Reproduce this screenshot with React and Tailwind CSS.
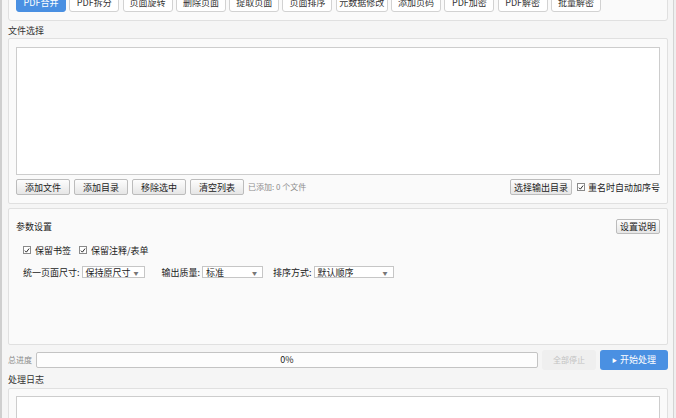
import React from 'react';

const tabs = ['PDF合并', 'PDF拆分', '页面旋转', '删除页面', '提取页面', '页面排序', '元数据修改', '添加页码', 'PDF加密', 'PDF解密', '批量解密'];

const Check = () => (
  <span className="w-[8px] h-[8px] bg-white border border-[#8a8a8a] flex items-center justify-center shrink-0">
    <svg width="7" height="7" viewBox="0 0 8 8">
      <path d="M1.2 4.2 L3.2 6.2 L6.8 1.4" fill="none" stroke="#222" strokeWidth="1.3" />
    </svg>
  </span>
);

const Btn = ({ children, className = '' }) => (
  <button className={`h-[16px] flex items-center justify-center bg-gradient-to-b from-[#fdfdfd] to-[#e6e6e6] border border-[#bcbcbc] rounded-[2px] text-[9px] leading-none text-[#222] ${className}`}>
    {children}
  </button>
);

const Select = ({ value, w }) => (
  <div className={`h-[12px] ${w} bg-white border border-[#c6c6c6] flex items-center justify-between pl-[3px] pr-[5px] text-[9px] leading-none text-[#222]`}>
    <span>{value}</span>
    <span className="text-[5px] text-[#777]">▼</span>
  </div>
);

export default function App() {
  return (
    <div
      className="w-[676px] h-[418px] overflow-hidden bg-[#f5f5f5] flex text-[#333]"
      style={{ fontFamily: '"Noto Sans CJK SC", "Noto Sans", sans-serif' }}
    >
      <div className="w-[2px] bg-[#cfcfcf] shrink-0" />
      <div className="flex-1 pl-[6px] pr-[5px] flex flex-col">
        {/* 顶部功能按钮 */}
        <div className="-mt-[16px] h-[37px] bg-[#fafafa] border border-[#e0e0e0] rounded-[3px] pt-[7px] pl-[7px] flex gap-[3.3px] shrink-0">
          {tabs.map((t, i) => (
            <button
              key={t}
              className={`h-[20px] ${t === '元数据修改' ? 'w-[52px]' : 'w-[50px]'} rounded-[3px] text-[9px] leading-none flex items-end justify-center pb-[4px] ${
                i === 0 ? 'bg-[#4a90e2] text-white border border-[#4a90e2]' : 'bg-white border border-[#d2d2d2] text-[#333]'
              }`}
            >
              {t}
            </button>
          ))}
        </div>

        <div className="h-[17px] pt-[5px] text-[9px] leading-[10px] text-[#333] shrink-0">文件选择</div>

        {/* 文件选择 */}
        <div className="h-[166px] bg-[#fafafa] border border-[#e0e0e0] rounded-[2px] px-[7px] pt-[8px] flex flex-col shrink-0">
          <div className="h-[128px] bg-white border border-[#cdcdcd]" />
          <div className="mt-[4px] flex items-center">
            <div className="flex items-center gap-[4px]">
              <Btn className="w-[54px]">添加文件</Btn>
              <Btn className="w-[54px]">添加目录</Btn>
              <Btn className="w-[54px]">移除选中</Btn>
              <Btn className="w-[54px]">清空列表</Btn>
              <span className="text-[8px] text-[#8c8c8c]">已添加: 0 个文件</span>
            </div>
            <div className="ml-auto flex items-center">
              <Btn className="w-[62px]">选择输出目录</Btn>
              <span className="ml-[5px]"><Check /></span>
              <span className="ml-[3px] text-[9px] text-[#222] leading-none">重名时自动加序号</span>
            </div>
          </div>
        </div>

        {/* 参数设置 */}
        <div className="mt-[4px] h-[137px] bg-[#fafafa] border border-[#e0e0e0] rounded-[2px] px-[7px] pt-[10px] shrink-0">
          <div className="h-[15px] flex items-center justify-between">
            <span className="text-[9px] leading-none text-[#222]">参数设置</span>
            <Btn className="w-[44px] !h-[15px]">设置说明</Btn>
          </div>
          <div className="mt-[11px] pl-[7px] flex items-center h-[10px] text-[9px] leading-none text-[#222]">
            <Check />
            <span className="ml-[4px]">保留书签</span>
            <span className="ml-[8px]"><Check /></span>
            <span className="ml-[4px]">保留注释/表单</span>
          </div>
          <div className="mt-[11px] pl-[7px] flex items-center text-[9px] leading-none text-[#222]">
            <span>统一页面尺寸:</span>
            <span className="ml-[2px]"><Select value="保持原尺寸" w="w-[63px]" /></span>
            <span className="ml-[17px]">输出质量:</span>
            <span className="ml-[2px]"><Select value="标准" w="w-[61px]" /></span>
            <span className="ml-[10px]">排序方式:</span>
            <span className="ml-[2px]"><Select value="默认顺序" w="w-[80px]" /></span>
          </div>
        </div>

        {/* 进度 */}
        <div className="mt-[5px] h-[20px] flex items-center shrink-0">
          <span className="w-[28px] text-[8px] leading-none text-[#8c8c8c]">总进度</span>
          <div className="flex-1 h-[16px] bg-[#fdfdfd] border border-[#c4c4c4] rounded-[2px] flex items-center justify-center text-[9px] text-[#222]">0%</div>
          <button className="ml-[4px] w-[54px] h-[20px] bg-[#efefef] rounded-[3px] text-[8px] text-[#c2c2c2]">全部停止</button>
          <button className="ml-[4px] w-[68px] h-[20px] bg-[#4a90e2] rounded-[3px] text-[9px] text-white flex items-center justify-center gap-[3px]">
            <span className="text-[5px]">▶</span>开始处理
          </button>
        </div>

        <div className="h-[18px] flex items-center text-[9px] leading-none text-[#333] shrink-0">处理日志</div>

        <div className="flex-1 bg-[#fafafa] border border-[#e0e0e0] rounded-[2px] px-[7px] pt-[7px]">
          <div className="h-[40px] bg-white border border-[#cdcdcd]" />
        </div>
      </div>
      <div className="w-[3px] border-l border-[#d4d4d4] bg-[#efefef] shrink-0" />
    </div>
  );
}
